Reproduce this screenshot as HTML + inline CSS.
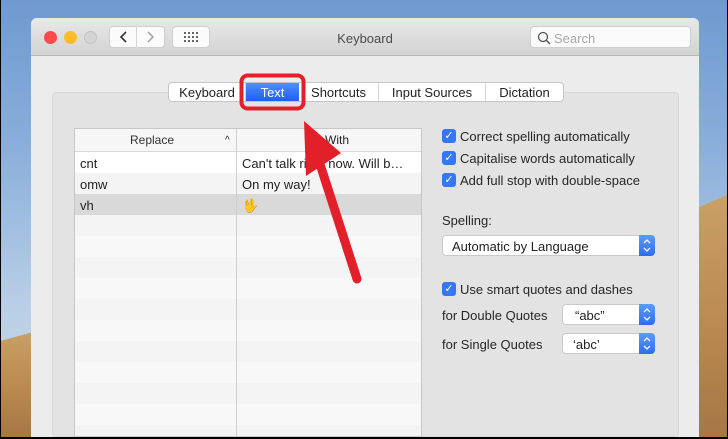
<!DOCTYPE html>
<html><head><meta charset="utf-8"><style>
*{margin:0;padding:0;box-sizing:border-box}
body{width:728px;height:439px;overflow:hidden;position:relative;font-family:"Liberation Sans",sans-serif;background:#000}
.abs{position:absolute}
#wall{left:1px;top:0;width:726px;height:437px;background:linear-gradient(180deg,#6f9ad0 0%,#86acd9 30%,#9ebde0 50%,#b9cfe6 70%,#c9d8e8 100%)}
.dune{background:linear-gradient(180deg,#c9a066,#b8874f 60%,#a57745)}
#win{left:31px;top:18px;width:668px;height:419px;background:#ececec;border-radius:6px 6px 0 0;overflow:hidden}
#title{left:0;top:0;width:668px;height:38px;background:linear-gradient(#e8e8e8,#d3d3d3);border-bottom:1px solid #b8b8b8}
.dot{width:13px;height:13px;border-radius:50%;top:13px}
.btn{background:#fbfbfb;border:1px solid #cfcfcf;border-radius:4px;height:22px;top:8px}
.tabs{left:137px;top:64px;height:20px;display:flex;border:1px solid #c6c6c6;border-radius:4px;background:#fff;font-size:13px;color:#222}
.tabs div{height:18px;line-height:20px;text-align:center;border-right:1px solid #d4d4d4}
#inner{left:21px;top:74px;width:627px;height:345px;background:#e3e3e3;border:1px solid #d8d8d8;border-radius:4px}
#tbl{left:43px;top:110px;width:348px;height:309px;background:#fff;border:1px solid #c7c7c7;overflow:hidden}
.row{position:absolute;left:0;width:346px;height:21px;font-size:13px;color:#222;line-height:23px}
.row span{position:absolute}
.cb{width:14px;height:14px;border-radius:3px;background:#3478f6;color:#fff;font-size:11px;text-align:center;line-height:14px}
.lbl{font-size:13px;color:#262626}
.pop{background:#fff;border:1px solid #c9c9c9;border-radius:4px;height:21px;font-size:13px;color:#222;line-height:21px}
.pop .ar{position:absolute;right:-1px;top:-1px;width:16px;height:21px;background:linear-gradient(#5a9bff,#2c6df0);border-radius:0 4px 4px 0}
</style></head><body>
<div id="wall" class="abs"></div>
<div class="abs dune" style="left:1px;top:330px;width:40px;height:107px;clip-path:polygon(0 10%,100% 0,100% 100%,0 100%)"></div>
<div class="abs dune" style="left:699px;top:195px;width:28px;height:242px;clip-path:polygon(0 5%,100% 0,100% 100%,0 100%)"></div>
<div id="win" class="abs">
 <div id="title" class="abs">
  <div class="abs dot" style="left:13px;background:#fc4a4a"></div>
  <div class="abs dot" style="left:33px;background:#fdbc2c"></div>
  <div class="abs dot" style="left:53px;background:#d4d4d4;border:1px solid #c2c2c2"></div>
  <div class="abs btn" style="left:78px;width:56px"></div>
  <div class="abs" style="left:105px;top:8px;width:1px;height:22px;background:#d6d6d6"></div>
  <svg class="abs" style="left:78px;top:8px" width="56" height="22"><path d="M17 6 L12 11 L17 16" stroke="#333" stroke-width="1.6" fill="none"/><path d="M39 6 L44 11 L39 16" stroke="#aaa" stroke-width="1.6" fill="none"/></svg>
  <div class="abs btn" style="left:141px;width:38px"></div>
  <svg class="abs" style="left:153px;top:14px" width="14" height="10"><g fill="#333"><circle cx="1" cy="1" r="1"/><circle cx="5" cy="1" r="1"/><circle cx="9" cy="1" r="1"/><circle cx="13" cy="1" r="1"/><circle cx="1" cy="5" r="1"/><circle cx="5" cy="5" r="1"/><circle cx="9" cy="5" r="1"/><circle cx="13" cy="5" r="1"/><circle cx="1" cy="9" r="1"/><circle cx="5" cy="9" r="1"/><circle cx="9" cy="9" r="1"/><circle cx="13" cy="9" r="1"/></g></svg>
  <div class="abs" style="left:0;width:668px;top:13px;text-align:center;font-size:13px;color:#4a4a4a">Keyboard</div>
  <div class="abs" style="left:499px;top:8px;width:161px;height:22px;background:#fbfbfb;border:1px solid #cfcfcf;border-radius:4px"></div>
  <svg class="abs" style="left:506px;top:13px" width="14" height="14"><circle cx="6" cy="6" r="4.5" stroke="#555" stroke-width="1.3" fill="none"/><path d="M9.3 9.3 L13 13" stroke="#555" stroke-width="1.4"/></svg>
  <div class="abs" style="left:523px;top:13px;font-size:13px;color:#a8a8a8">Search</div>
 </div>
 <div id="inner" class="abs"></div>
 <div class="tabs abs">
  <div style="width:77px">Keyboard</div>
  <div style="width:53px;background:linear-gradient(#4f8ffe,#1f5ef5);color:#fff;border-right:none">Text</div>
  <div style="width:80px">Shortcuts</div>
  <div style="width:107px">Input Sources</div>
  <div style="width:77px;border-right:none">Dictation</div>
 </div>
 <div id="tbl" class="abs">
  <div class="row" style="top:0;height:23px;background:#f6f6f6;border-bottom:1px solid #d8d8d8;font-size:12px;line-height:23px"><span style="left:55px;color:#333">Replace</span><span style="left:150px;font-size:10px">^</span><span style="left:250px">With</span></div>
  <div class="row" style="top:23px;background:#fff"><span style="left:5px">cnt</span><span style="left:167px">Can't talk right now. Will b…</span></div>
  <div class="row" style="top:44px;background:#f4f4f4"><span style="left:5px">omw</span><span style="left:167px">On my way!</span></div>
  <div class="row" style="top:65px;background:#d9d9d9"><span style="left:5px">vh</span><span style="left:167px">🖖</span></div>
  <div class="row" style="top:86px;background:#f4f4f4"></div>
  <div class="row" style="top:107px;background:#f8f8f8"></div>
  <div class="row" style="top:128px;background:#f4f4f4"></div>
  <div class="row" style="top:149px;background:#f8f8f8"></div>
  <div class="row" style="top:170px;background:#f4f4f4"></div>
  <div class="row" style="top:191px;background:#f8f8f8"></div>
  <div class="row" style="top:212px;background:#f4f4f4"></div>
  <div class="row" style="top:233px;background:#f8f8f8"></div>
  <div class="row" style="top:254px;background:#f4f4f4"></div>
  <div class="row" style="top:275px;background:#f8f8f8"></div>
  <div class="row" style="top:296px;background:#f4f4f4"></div>
  <div class="abs" style="left:161px;top:0;width:1px;height:309px;background:#cfcfcf"></div>
 </div>
 <div class="abs cb" style="left:411px;top:111px">✓</div><div class="abs lbl" style="left:429px;top:111px">Correct spelling automatically</div>
 <div class="abs cb" style="left:411px;top:133px">✓</div><div class="abs lbl" style="left:429px;top:133px">Capitalise words automatically</div>
 <div class="abs cb" style="left:411px;top:155px">✓</div><div class="abs lbl" style="left:429px;top:155px">Add full stop with double-space</div>
 <div class="abs lbl" style="left:411px;top:195px">Spelling:</div>
 <div class="abs pop" style="left:411px;top:217px;width:213px;padding-left:9px">Automatic by Language<div class="ar"><svg width="16" height="21"><path d="M5 8 L8 5 L11 8 M5 13 L8 16 L11 13" stroke="#fff" stroke-width="1.3" fill="none"/></svg></div></div>
 <div class="abs cb" style="left:411px;top:264px">✓</div><div class="abs lbl" style="left:429px;top:264px">Use smart quotes and dashes</div>
 <div class="abs lbl" style="left:411px;top:290px">for Double Quotes</div>
 <div class="abs pop" style="left:531px;top:286px;width:93px;padding-left:12px">“abc”<div class="ar"><svg width="16" height="21"><path d="M5 8 L8 5 L11 8 M5 13 L8 16 L11 13" stroke="#fff" stroke-width="1.3" fill="none"/></svg></div></div>
 <div class="abs lbl" style="left:411px;top:319px">for Single Quotes</div>
 <div class="abs pop" style="left:531px;top:315px;width:93px;padding-left:10px">‘abc’<div class="ar"><svg width="16" height="21"><path d="M5 8 L8 5 L11 8 M5 13 L8 16 L11 13" stroke="#fff" stroke-width="1.3" fill="none"/></svg></div></div>
</div>
<svg class="abs" style="left:0;top:0" width="728" height="439">
 <rect x="241.5" y="75.5" width="62" height="33" rx="6" fill="none" stroke="#e3202a" stroke-width="4"/>
 <line x1="318" y1="158" x2="357" y2="279" stroke="#e3202a" stroke-width="9" stroke-linecap="round"/>
 <polygon points="304,121 306,176 341,153" fill="#e3202a"/>
</svg>
<div class="abs" style="left:0;top:0;width:1px;height:439px;background:#000"></div>
<div class="abs" style="left:0;top:437px;width:728px;height:2px;background:#000"></div>
<div class="abs" style="left:727px;top:0;width:1px;height:439px;background:#000"></div>
</body></html>
